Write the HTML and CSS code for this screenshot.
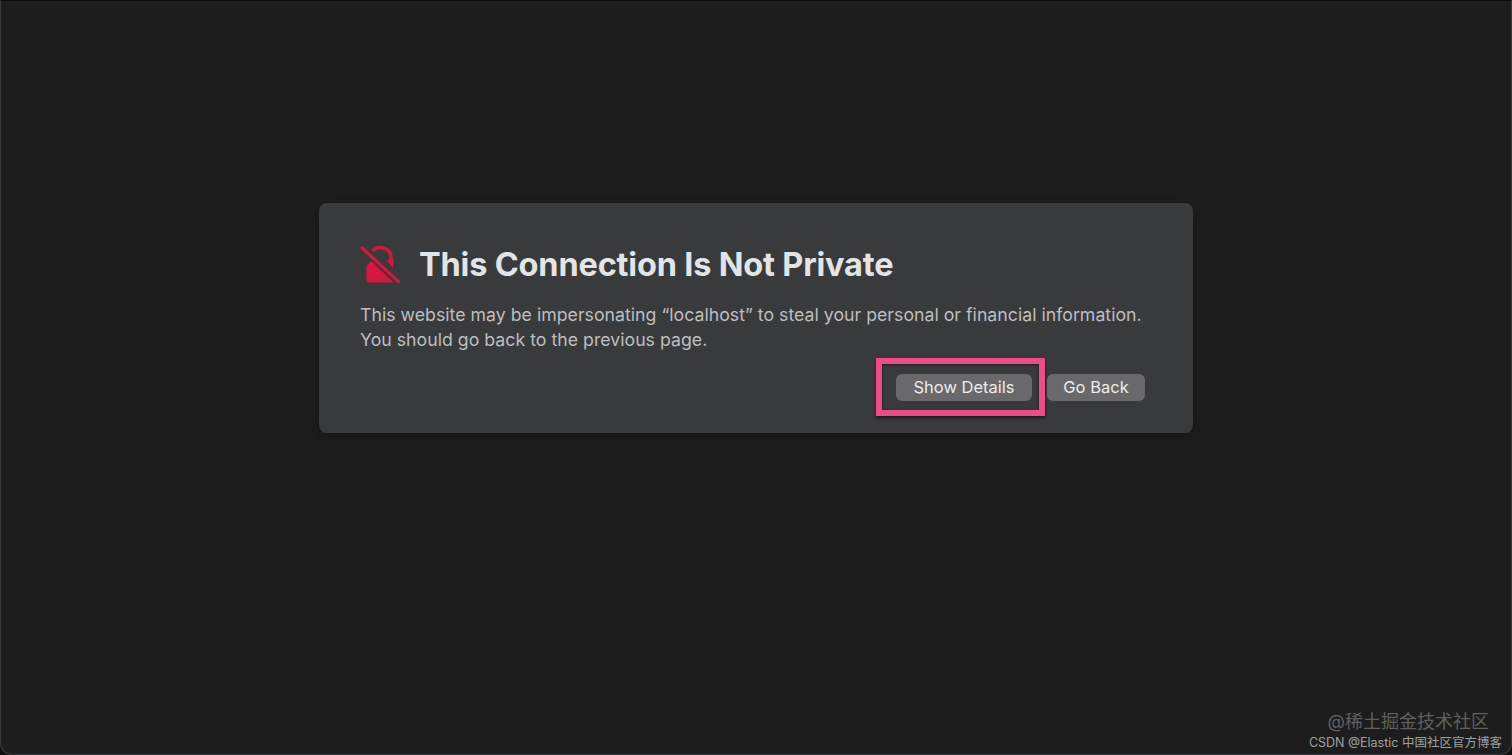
FILE: index.html
```html
<!DOCTYPE html>
<html lang="en">
<head>
<meta charset="utf-8">
<title>This Connection Is Not Private</title>
<link rel="stylesheet" href="styles.css">
</head>
<body>
<main class="window">
  <section class="card">
    <header class="head">
      <svg class="icon" width="42" height="40" viewBox="0 0 42 40" aria-hidden="true">
        <path class="lock-body" d="M6.500 20.500 L11.500 16 L33.500 37.500 H8.500 Q6.500 37.500 6.500 35.500 Z"/>
        <path class="lock-shackle" d="M12.500 6 C15 3.200 18 2.500 20 2.500 C27 2.500 31 7 31 12 V19"/>
        <path class="lock-tip" d="M26.500 15.500 L34 14.500 L33 23 Z"/>
        <path class="lock-slash" d="M1 2 L39.500 37.500"/>
      </svg>
      <h1 class="title">This Connection Is Not Private</h1>
    </header>
    <p class="message">This website may be impersonating “localhost” to steal your personal or financial information.<br>You should go back to the previous page.</p>
    <div class="actions">
      <button class="btn btn-details" type="button">Show Details<span class="highlight"></span></button>
      <button class="btn btn-back" type="button">Go Back</button>
    </div>
  </section>
</main>
<div class="mark">
  <div class="mark-top">@稀土掘金技术社区</div>
  <div class="mark-bottom">CSDN @Elastic 中国社区官方博客</div>
</div>
</body>
</html>
```

FILE: styles.css
```css
* { box-sizing: border-box; }
html, body { height: 100%; margin: 0; }
body {
  background: #101010;
  font-family: Inter, "Noto Sans", "Noto Sans CJK SC", sans-serif;
  overflow: hidden;
  position: relative;
}
.window {
  height: 755px;
  background: #1d1d1d;
  border: 1px solid #3a3b3c;
  border-top-color: #0c0c0c;
  border-radius: 0 0 12px 12px;
  padding-top: 202px;
  display: flex;
  justify-content: center;
  align-items: flex-start;
}
.card {
  width: 874px;
  height: 230px;
  background: #393a3c;
  border-radius: 8px;
  box-shadow: 0 3px 12px rgba(0, 0, 0, .3);
  padding: 40px 48px 0 42px;
}
.head { display: flex; align-items: center; gap: 17px; height: 42px; }
.icon { flex: none; margin-left: -1px; margin-top: 2px; }
.lock-body, .lock-tip { fill: #d5173f; }
.lock-shackle { fill: none; stroke: #d5173f; stroke-width: 3.500; }
.lock-slash { stroke: #d5173f; stroke-width: 3.200; }
.title {
  margin: 2px 0 0;
  font-size: 32.500px;
  line-height: 42px;
  font-weight: 700;
  letter-spacing: -.18px;
  color: #e3e4e5;
  white-space: nowrap;
}
.message {
  margin: 17px 0 0 -1px;
  font-size: 17.700px;
  line-height: 25px;
  letter-spacing: .02px;
  color: #bdbec0;
  white-space: nowrap;
}
.actions { display: flex; justify-content: flex-end; gap: 15px; margin-top: 22px; }
.btn {
  position: relative;
  height: 27px;
  padding: 0;
  border: 0;
  border-radius: 6px;
  background: #69696b;
  color: #ececed;
  font: 400 16.500px/27px Inter, "Noto Sans", sans-serif;
  text-align: center;
}
.btn-details { width: 136px; }
.btn-back { width: 98px; }
.highlight {
  position: absolute;
  left: -20px;
  top: -16px;
  width: 169px;
  height: 58px;
  border: 6px solid #f04a87;
  box-shadow: 0 2px 3px rgba(0, 0, 0, .55), inset 0 1px 3px rgba(0, 0, 0, .5);
}
.mark {
  position: absolute;
  right: 10px;
  bottom: 3px;
  text-align: right;
}
.mark-top { font-size: 18px; line-height: 24px; color: #5f5f5f; margin-right: 13px; }
.mark-bottom { font-size: 12.500px; line-height: 18px; color: #a0a0a0; }
```
